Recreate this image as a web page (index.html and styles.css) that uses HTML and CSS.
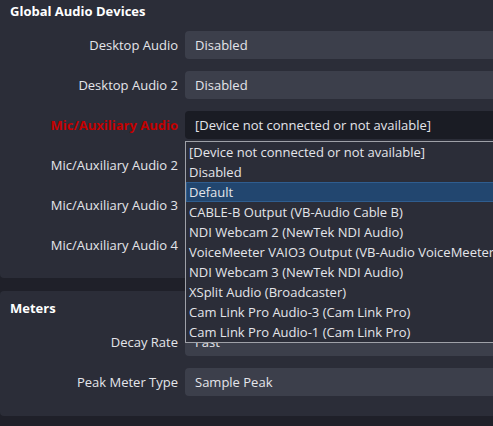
FILE: index.html
```html
<!DOCTYPE html>
<html>
<head>
<meta charset="utf-8">
<link rel="stylesheet" href="styles.css">
</head>
<body>
<div class="page">
  <section class="group group-audio">
    <h2 class="group-title">Global Audio Devices</h2>
    <div class="form">
      <div class="label">Desktop Audio</div><div class="combo">Disabled</div>
      <div class="label">Desktop Audio 2</div><div class="combo">Disabled</div>
      <div class="label label-error">Mic/Auxiliary Audio</div><div class="combo combo-open">[Device not connected or not available]</div>
      <div class="label">Mic/Auxiliary Audio 2</div><div class="combo"></div>
      <div class="label">Mic/Auxiliary Audio 3</div><div class="combo"></div>
      <div class="label">Mic/Auxiliary Audio 4</div><div class="combo"></div>
    </div>
  </section>
  <section class="group group-meters">
    <h2 class="group-title">Meters</h2>
    <div class="form">
      <div class="label">Decay Rate</div><div class="combo">Fast</div>
      <div class="label">Peak Meter Type</div><div class="combo">Sample Peak</div>
    </div>
  </section>
  <ul class="popup">
    <li>[Device not connected or not available]</li>
    <li>Disabled</li>
    <li class="selected">Default</li>
    <li>CABLE-B Output (VB-Audio Cable B)</li>
    <li>NDI Webcam 2 (NewTek NDI Audio)</li>
    <li>VoiceMeeter VAIO3 Output (VB-Audio VoiceMeeter VAIO3)</li>
    <li>NDI Webcam 3 (NewTek NDI Audio)</li>
    <li>XSplit Audio (Broadcaster)</li>
    <li>Cam Link Pro Audio-3 (Cam Link Pro)</li>
    <li>Cam Link Pro Audio-1 (Cam Link Pro)</li>
  </ul>
</div>
</body>
</html>
```

FILE: styles.css
```css
html, body {
  margin: 0;
  padding: 0;
  background: #1f2029;
  overflow: hidden;
}
body {
  width: 493px;
  height: 426px;
  font-family: "Open Sans", "Noto Sans", sans-serif;
  font-size: 13px;
  color: #e4e5ea;
}
.page {
  position: relative;
  width: 580px;
  display: flex;
  flex-direction: column;
  gap: 13px;
}
.group {
  background: #2b2d38;
  border-radius: 4px;
  padding: 7px 0 20px 0;
}
.group-audio {
  margin-top: -6px;
  padding-bottom: 19px;
}
.group-title {
  margin: 0 0 10px 0;
  padding-left: 10px;
  font-size: 13px;
  font-weight: 700;
  line-height: 20px;
  color: #ffffff;
}
.form {
  display: grid;
  grid-template-columns: 178px 1fr;
  column-gap: 7px;
  row-gap: 12px;
  align-items: center;
}
.label {
  text-align: right;
  line-height: 20px;
  white-space: nowrap;
}
.label-error {
  color: #c30000;
  font-weight: 700;
}
.combo {
  height: 28px;
  line-height: 28px;
  padding-left: 10px;
  background: #3c3f4b;
  border-radius: 4px;
  white-space: nowrap;
}
.combo-open {
  background: #1a1c24;
}
.popup {
  position: absolute;
  left: 185px;
  top: 141px;
  width: 400px;
  margin: 0;
  padding: 0;
  list-style: none;
  background: #2b2d38;
  border: 1px solid #9fa1a8;
}
.popup li {
  height: 20px;
  line-height: 20px;
  padding-left: 3px;
  white-space: nowrap;
  box-sizing: border-box;
}
.popup li.selected {
  background: #22466f;
  border: 1px solid #2f5d8f;
  line-height: 18px;
  padding-left: 2px;
}
```
